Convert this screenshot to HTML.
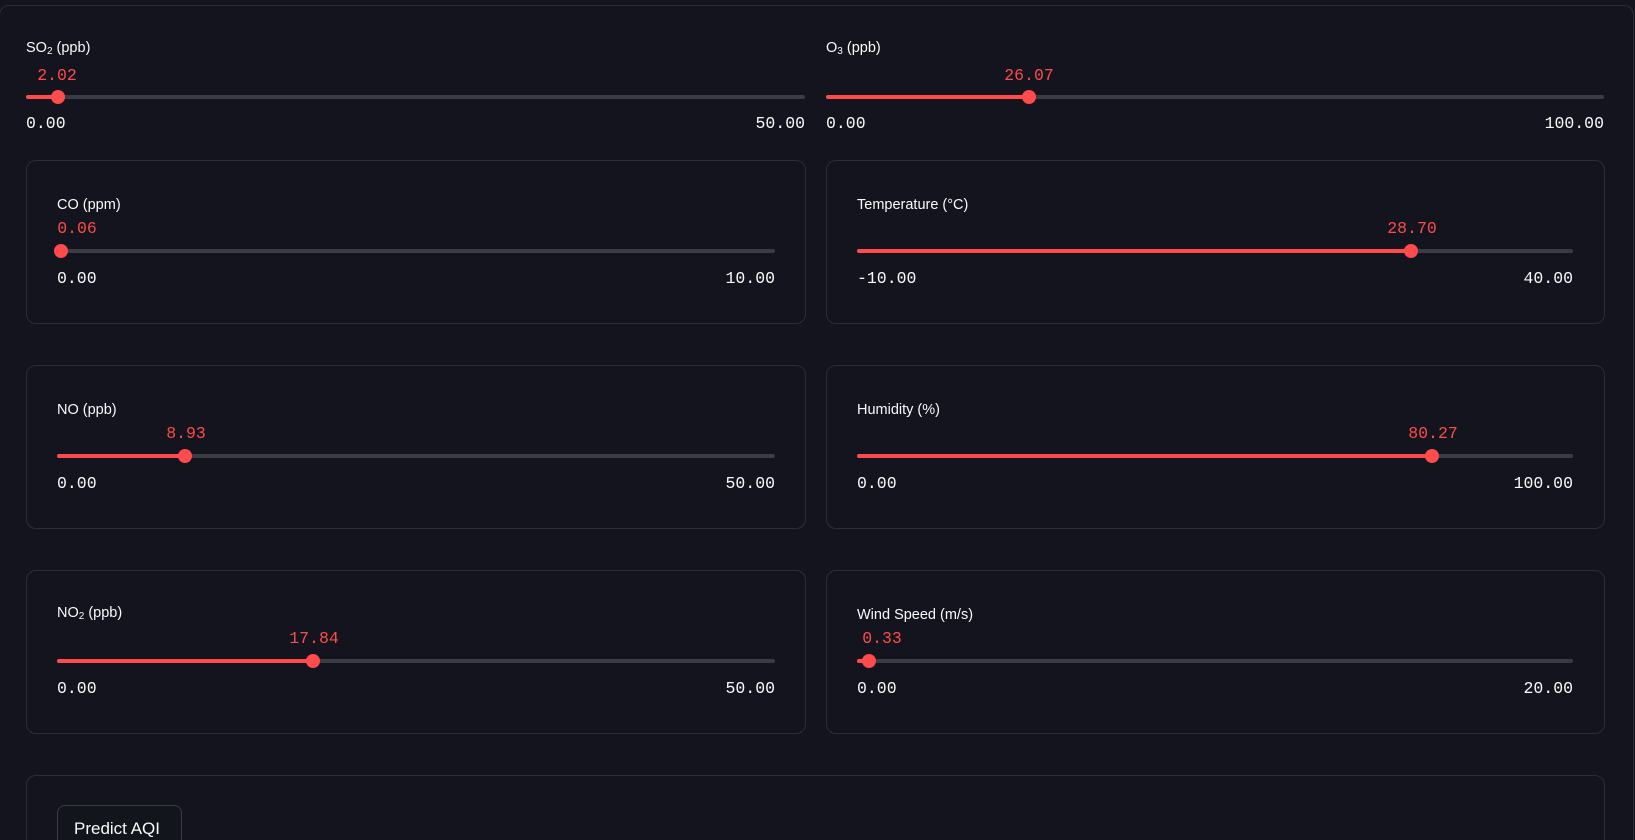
<!DOCTYPE html>
<html><head><meta charset="utf-8"><style>
*{margin:0;padding:0;box-sizing:border-box}
html,body{width:1635px;height:840px;overflow:hidden;background:#13141d}
body{font-family:"Liberation Sans",sans-serif;color:#fafafa}
#root{position:relative;width:1635px;height:840px;overflow:hidden}
.outer{position:absolute;left:-1px;top:5px;width:1635px;height:835px;border:1px solid #2c2d37;border-bottom:none;border-radius:10px 10px 0 0}
.box{position:absolute;border:1px solid #2c2d37;border-radius:10px}
.lab{position:absolute;font-size:14.5px;line-height:18px;transform:translateY(-50%);white-space:nowrap}
.lab sub{font-size:10px;vertical-align:-2px}
.val{position:absolute;font-family:"Liberation Mono",monospace;font-size:16.5px;color:#ff4b4b;transform:translate(-50%,-50%);line-height:20px}
.mm{position:absolute;font-family:"Liberation Mono",monospace;font-size:16.5px;color:#fafafa;transform:translateY(-50%);line-height:20px}
.trk{position:absolute;height:4px;border-radius:2px;background:#3a3b45;transform:translateY(-50%)}
.fill{position:absolute;left:0;top:0;height:4px;border-radius:2px;background:#ff4b4b}
.th{position:absolute;width:14px;height:14px;border-radius:50%;background:#ff4b4b;transform:translate(-50%,-50%)}
.btn{position:absolute;left:57px;top:805px;width:125px;height:35px;border:1px solid #3a3b45;border-bottom:none;border-radius:8px 8px 0 0;background:#13151c;font-size:17px;padding:13px 0 0 16px;overflow:hidden}
</style></head><body><div id="root">
<div class="outer"></div>

<div class="lab" style="left:26px;top:50px">SO<sub>2</sub> (ppb)</div>
<div class="val" style="left:57px;top:76px">2.02</div>
<div class="trk" style="left:26px;top:97px;width:779px"><div class="fill" style="width:32px"></div></div>
<div class="th" style="left:58px;top:97px"></div>
<div class="mm" style="left:26px;top:124px">0.00</div>
<div class="mm" style="right:830px;top:124px">50.00</div>

<div class="lab" style="left:826px;top:50px">O<sub>3</sub> (ppb)</div>
<div class="val" style="left:1029px;top:76px">26.07</div>
<div class="trk" style="left:826px;top:97px;width:778px"><div class="fill" style="width:203px"></div></div>
<div class="th" style="left:1029px;top:97px"></div>
<div class="mm" style="left:826px;top:124px">0.00</div>
<div class="mm" style="right:31px;top:124px">100.00</div>

<div class="box" style="left:26px;top:160px;width:780px;height:164px"></div>
<div class="box" style="left:826px;top:160px;width:779px;height:164px"></div>
<div class="box" style="left:26px;top:365px;width:780px;height:164px"></div>
<div class="box" style="left:826px;top:365px;width:779px;height:164px"></div>
<div class="box" style="left:26px;top:570px;width:780px;height:164px"></div>
<div class="box" style="left:826px;top:570px;width:779px;height:164px"></div>
<div class="box" style="left:26px;top:775px;width:1579px;height:65px;border-bottom:none;border-radius:10px 10px 0 0"></div>

<div class="lab" style="left:57px;top:205px">CO (ppm)</div>
<div class="val" style="left:77px;top:229px">0.06</div>
<div class="trk" style="left:57px;top:251px;width:718px"><div class="fill" style="width:4px"></div></div>
<div class="th" style="left:61px;top:251px"></div>
<div class="mm" style="left:57px;top:279px">0.00</div>
<div class="mm" style="right:860px;top:279px">10.00</div>

<div class="lab" style="left:857px;top:205px">Temperature (°C)</div>
<div class="val" style="left:1412px;top:229px">28.70</div>
<div class="trk" style="left:857px;top:251px;width:716px"><div class="fill" style="width:554px"></div></div>
<div class="th" style="left:1411px;top:251px"></div>
<div class="mm" style="left:857px;top:279px">-10.00</div>
<div class="mm" style="right:62px;top:279px">40.00</div>

<div class="lab" style="left:57px;top:410px">NO (ppb)</div>
<div class="val" style="left:186px;top:434px">8.93</div>
<div class="trk" style="left:57px;top:456px;width:718px"><div class="fill" style="width:128px"></div></div>
<div class="th" style="left:185px;top:456px"></div>
<div class="mm" style="left:57px;top:484px">0.00</div>
<div class="mm" style="right:860px;top:484px">50.00</div>

<div class="lab" style="left:857px;top:410px">Humidity (%)</div>
<div class="val" style="left:1433px;top:434px">80.27</div>
<div class="trk" style="left:857px;top:456px;width:716px"><div class="fill" style="width:575px"></div></div>
<div class="th" style="left:1432px;top:456px"></div>
<div class="mm" style="left:857px;top:484px">0.00</div>
<div class="mm" style="right:62px;top:484px">100.00</div>

<div class="lab" style="left:57px;top:615px">NO<sub>2</sub> (ppb)</div>
<div class="val" style="left:314px;top:639px">17.84</div>
<div class="trk" style="left:57px;top:661px;width:718px"><div class="fill" style="width:256px"></div></div>
<div class="th" style="left:313px;top:661px"></div>
<div class="mm" style="left:57px;top:689px">0.00</div>
<div class="mm" style="right:860px;top:689px">50.00</div>

<div class="lab" style="left:857px;top:615px">Wind Speed (m/s)</div>
<div class="val" style="left:882px;top:639px">0.33</div>
<div class="trk" style="left:857px;top:661px;width:716px"><div class="fill" style="width:12px"></div></div>
<div class="th" style="left:869px;top:661px"></div>
<div class="mm" style="left:857px;top:689px">0.00</div>
<div class="mm" style="right:62px;top:689px">20.00</div>

<div class="btn">Predict AQI</div>
</div></body></html>
